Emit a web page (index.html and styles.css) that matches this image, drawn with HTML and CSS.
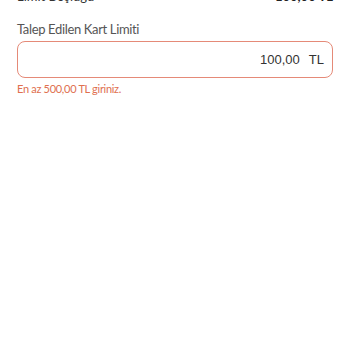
FILE: index.html
```html
<!DOCTYPE html>
<html lang="tr">
<head>
<meta charset="utf-8">
<link rel="stylesheet" href="styles.css">
</head>
<body>
<div class="page">
  <div class="summary-row">
    <span class="summary-label">Limit Boşluğu</span>
    <span class="summary-value">100,00 TL</span>
  </div>
  <div class="field">
    <div class="field-label">Talep Edilen Kart Limiti</div>
    <div class="input-box">
      <span class="input-value">100,00</span>
      <span class="input-unit">TL</span>
    </div>
    <div class="field-error">En az 500,00 TL giriniz.</div>
  </div>
</div>
</body>
</html>
```
FILE: styles.css
```css
html, body {
  margin: 0;
  padding: 0;
  background: #ffffff;
}
.page {
  padding: 0 17px 0 17px;
  font-family: Lato, "Open Sans", sans-serif;
  margin-top: -11px;
}
.summary-row {
  display: flex;
  justify-content: space-between;
  align-items: baseline;
  height: 14px;
  line-height: 14px;
  font-size: 13px;
  color: #333;
}
.summary-value {
  font-weight: 700;
  color: #222;
}
.field {
  padding-top: 18px;
}
.field-label {
  font-size: 13px;
  line-height: 16px;
  letter-spacing: -0.35px;
  color: #555;
}
.input-box {
  margin-top: 4px;
  height: 37px;
  box-sizing: border-box;
  border: 1px solid #e58a78;
  border-radius: 8px;
  display: flex;
  justify-content: flex-end;
  align-items: center;
  padding: 0 8px;
  font-family: "Liberation Sans", Arial, sans-serif;
  font-size: 13px;
  color: #333;
}
.input-unit {
  margin-left: 9px;
}
.field-error {
  margin-top: 4px;
  font-size: 11px;
  line-height: 14px;
  letter-spacing: -0.3px;
  color: #e0704f;
}
```
